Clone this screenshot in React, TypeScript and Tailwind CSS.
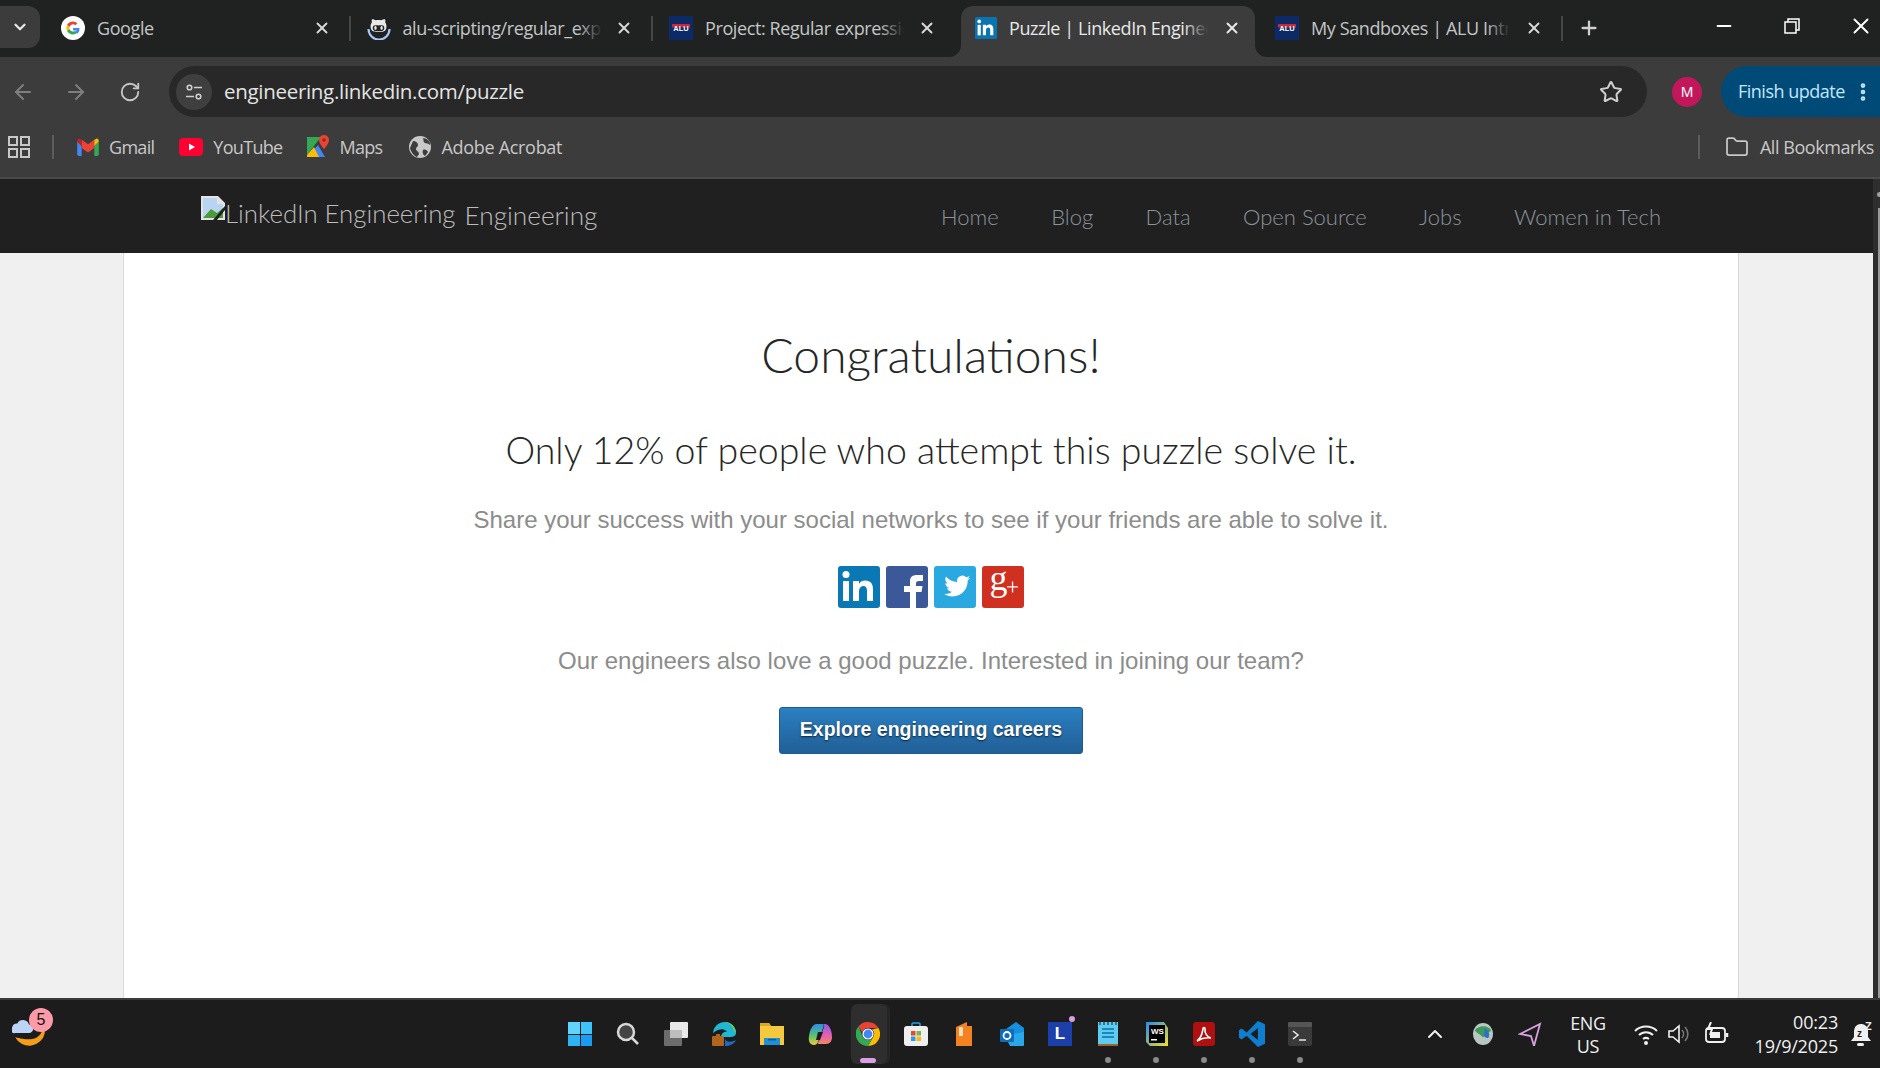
import type { ReactNode } from 'react';
import { ArrowLeft, ArrowRight, ChevronDown, ChevronUp, Folder, Minus, MoreVertical, Plus, RotateCw, Star, X } from 'lucide-react';
import { FaGithubAlt } from 'react-icons/fa';

const uiFont = "font-['Open_Sans',sans-serif]";

function GoogleIcon() {
  return (
    <svg viewBox="0 0 24 24" className="w-6 h-6 shrink-0">
      <circle cx="12" cy="12" r="12" fill="#fff" />
      <path d="M12 5.500a6.500 6.500 0 0 1 4.400 1.700l-2 2A3.700 3.700 0 0 0 8.500 11L6 9a6.500 6.500 0 0 1 6-3.500z" fill="#ea4335" />
      <path d="M6 9l2.500 2a3.700 3.700 0 0 0 0 2L6 15a6.500 6.500 0 0 1 0-6z" fill="#fbbc05" />
      <path d="M6 15l2.500-2a3.700 3.700 0 0 0 5.500 2l2.200 1.800A6.500 6.500 0 0 1 6 15z" fill="#34a853" />
      <path d="M18.400 12h-6.300v2.600h3.600a3 3 0 0 1-1.700 1.400l2.200 1.800a6.300 6.300 0 0 0 2.200-5.800z" fill="#4285f4" />
    </svg>
  );
}

function GithubIcon() {
  return (
    <div className="relative w-6 h-6 shrink-0 flex items-center justify-center">
      <svg viewBox="0 0 24 24" className="absolute inset-0 w-6 h-6">
        <path d="M1.500 13a10.500 10.500 0 0 0 21 0" fill="none" stroke="#a8c7fa" strokeWidth="2.200" />
      </svg>
      <FaGithubAlt size={17} className="relative -mt-[6px] text-[#e8e8e8]" />
    </div>
  );
}

function AluIcon() {
  return (
    <svg viewBox="0 0 24 24" className="w-6 h-6 shrink-0">
      <rect width="24" height="24" fill="#0b2a66" />
      <rect x="3" y="8" width="18" height="3.500" fill="#c8283c" />
      <text x="12" y="15" textAnchor="middle" fontFamily="'Liberation Sans', sans-serif" fontSize="7.500" fontWeight="700" fill="#fff">ALU</text>
    </svg>
  );
}

function InIcon({ className, fill }: { className: string; fill: string }) {
  return (
    <svg viewBox="0 0 42 42" className={className}>
      <rect width="42" height="42" rx="3" fill={fill} />
      <rect x="5" y="15" width="6" height="20" fill="#fff" />
      <circle cx="8" cy="8.500" r="3.500" fill="#fff" />
      <path d="M15 15h6v3c1-2 3-3.500 6-3.500 6 0 8 3.500 8 9V35h-6V25c0-3-1-5-3.500-5S21 22 21 25v10h-6z" fill="#fff" />
    </svg>
  );
}

function Tab({ icon, title, width, divider = true }: { icon: ReactNode; title: string; width: string; divider?: boolean }) {
  return (
    <div className={`relative ${width} h-[51px] pb-[7px] shrink-0 flex items-center pl-[16px] pr-[12px] text-[#c4c6c6]`}>
      {icon}
      <div className={`relative ml-[12px] w-[199px] overflow-hidden whitespace-nowrap text-[18px] tracking-[-0.4px] leading-[24px] ${uiFont}`}>
        {title}
        <div className="absolute right-0 top-0 h-full w-[24px] bg-gradient-to-r from-transparent to-[#202222]" />
      </div>
      <X size={18} strokeWidth={2.5} className="ml-auto mr-[8px] text-[#d8d8d8]" />
      {divider && <div className="absolute right-0 top-[10px] h-[25px] w-[2px] bg-[#454747]" />}
    </div>
  );
}

function ActiveTab({ icon, title }: { icon: ReactNode; title: string }) {
  return (
    <div className="relative ml-[5.500px] mr-[4px] w-[294px] h-[51px] pb-[7px] shrink-0 flex items-center pl-[14px] pr-[8px] bg-[#3c3c3c] rounded-t-[12px] text-[#e8e8e8]">
      <svg viewBox="0 0 12 12" className="absolute -left-[12px] bottom-0 w-[12px] h-[12px]">
        <path d="M12 0v12H0A12 12 0 0 0 12 0z" fill="#3c3c3c" />
      </svg>
      <svg viewBox="0 0 12 12" className="absolute -right-[12px] bottom-0 w-[12px] h-[12px]">
        <path d="M0 0v12h12A12 12 0 0 1 0 0z" fill="#3c3c3c" />
      </svg>
      {icon}
      <div className={`relative ml-[12px] w-[199px] overflow-hidden whitespace-nowrap text-[18px] tracking-[-0.4px] leading-[24px] ${uiFont}`}>
        {title}
        <div className="absolute right-0 top-0 h-full w-[24px] bg-gradient-to-r from-transparent to-[#3c3c3c]" />
      </div>
      <X size={18} strokeWidth={2.5} className="ml-auto mr-[6px] text-[#e8e8e8]" />
    </div>
  );
}

function Bookmark({ icon, label, tracking = 'tracking-[-0.7px]' }: { icon: ReactNode; label: string; tracking?: string }) {
  return (
    <div className={`flex items-center gap-[10px] text-[18px] ${tracking} text-[#c8c8c8] ${uiFont}`}>
      {icon}
      {label}
    </div>
  );
}

function TaskIcon({ children, dot }: { children: ReactNode; dot?: boolean }) {
  return (
    <div className="relative w-[48px] h-[68px] flex items-center justify-center shrink-0">
      {children}
      {dot && <div className="absolute bottom-[5px] w-[6px] h-[6px] rounded-full bg-[#8a8a8a]" />}
    </div>
  );
}

export default function App() {
  return (
    <div className="h-[1068px] w-[1880px] flex flex-col overflow-hidden bg-[#f0f0f0]">
      {/* tab strip */}
      <div className="h-[57px] bg-[#202222] flex items-end shrink-0">
        <div className="w-[40px] h-[42px] mb-[9px] bg-[#3c3c3c] rounded-r-[12px] flex items-center justify-center shrink-0 text-[#e8e8e8]">
          <ChevronDown size={18} strokeWidth={3} />
        </div>
        <div className="ml-[5px] flex items-end">
          <Tab width="w-[305.500px]" icon={<GoogleIcon />} title="Google" />
          <Tab width="w-[302.500px]" icon={<GithubIcon />} title="alu-scripting/regular_expressions" />
          <Tab width="w-[302.500px]" icon={<AluIcon />} title="Project: Regular expressions" divider={false} />
          <ActiveTab icon={<InIcon className="w-[22px] h-[22px] shrink-0" fill="#0a74b0" />} title="Puzzle | LinkedIn Engineering" />
          <Tab width="w-[303.500px]" icon={<AluIcon />} title="My Sandboxes | ALU Intranet" />
        </div>
        <div className="h-[51px] pb-[7px] flex items-center ml-[15px] text-[#d0d0d0]">
          <Plus size={22} strokeWidth={2.5} />
        </div>
        <div className="ml-auto h-[51px] mb-[6px] flex items-center gap-[48.500px] pr-[6px] text-white">
          <Minus size={22} strokeWidth={2} />
          <svg viewBox="0 0 16 16" className="w-[16px] h-[16px]" fill="none" stroke="#fff" strokeWidth="1.500">
            <rect x="1" y="4" width="11" height="11" />
            <path d="M4 4V1h11v11h-3" />
          </svg>
          <X size={26} strokeWidth={1.75} />
        </div>
      </div>

      {/* toolbar */}
      <div className="h-[122px] bg-[#3c3c3c] border-b-2 border-[#4a4a4a] shrink-0 flex flex-col">
        <div className="mt-[9px] h-[51px] flex items-center">
          <div className="w-[169px] flex items-center pl-[11px] gap-[29px] shrink-0">
            <ArrowLeft size={24} className="text-[#7e7e7e]" />
            <ArrowRight size={24} className="text-[#7e7e7e]" />
            <RotateCw size={22} className="ml-[2px] text-[#c8c8c8]" />
          </div>
          <div className="w-[1478px] h-[51px] rounded-full bg-[#282828] flex items-center pl-[7px] pr-[24px] shrink-0">
            <div className="w-[36px] h-[36px] rounded-full bg-[#3f3f3f] flex items-center justify-center">
              <svg viewBox="0 0 20 20" className="w-[20px] h-[20px]" fill="none" stroke="#d0d0d0" strokeWidth="1.600">
                <circle cx="5.500" cy="5.500" r="2.300" />
                <path d="M10 5.500h8M2 14.500h8" />
                <circle cx="14.500" cy="14.500" r="2.300" />
              </svg>
            </div>
            <span className={`ml-[12px] text-[20.500px] tracking-[-0.3px] text-[#e3e3e3] ${uiFont}`}>engineering.linkedin.com/puzzle</span>
            <Star size={24} strokeWidth={2} className="ml-auto text-[#d0d0d0]" />
          </div>
          <div className="ml-[25px] w-[30px] h-[30px] rounded-full bg-[#c2185b] flex items-center justify-center text-white text-[14px] shrink-0">M</div>
          <div className={`ml-[19px] w-[160px] h-[51px] rounded-l-full bg-[#004a77] flex items-center pl-[17px] gap-[7px] text-[18px] tracking-[-0.5px] text-[#c2e7ff] shrink-0 ${uiFont}`}>
            Finish update
            <MoreVertical size={22} strokeWidth={3} />
          </div>
        </div>
        <div className="flex-1 flex items-center pl-[8px]">
          <svg viewBox="0 0 22 22" className="w-[22px] h-[22px] shrink-0" fill="none" stroke="#c8c8c8" strokeWidth="2">
            <rect x="1" y="1" width="8" height="8" />
            <rect x="13" y="1" width="8" height="8" />
            <rect x="1" y="13" width="8" height="8" />
            <rect x="13" y="13" width="8" height="8" />
          </svg>
          <div className="ml-[22px] h-[24px] w-[2px] bg-[#5c5c5c]" />
          <div className="ml-[23px] flex items-center gap-[25px]">
            <Bookmark
              label="Gmail"
              icon={
                <svg viewBox="0 0 24 20" className="w-[22px] h-[18px]">
                  <path d="M0 4v14a2 2 0 0 0 2 2h3V9z" fill="#4285f4" />
                  <path d="M24 4v14a2 2 0 0 1-2 2h-3V9z" fill="#34a853" />
                  <path d="M5 2v9l7 5 7-5V2l-7 5z" fill="#ea4335" />
                  <path d="M0 4l5 5V2L3 1C1.500 0 0 1.500 0 4z" fill="#c5221f" />
                  <path d="M24 4l-5 5V2l2-1c1.500-1 3 .5 3 3z" fill="#fbbc05" />
                </svg>
              }
            />
            <Bookmark
              label="YouTube"
              icon={
                <svg viewBox="0 0 24 18" className="w-[24px] h-[18px]">
                  <rect width="24" height="18" rx="4" fill="#ff0033" />
                  <path d="M10 5.500l6 3.500-6 3.500z" fill="#fff" />
                </svg>
              }
            />
            <Bookmark
              label="Maps"
              icon={
                <svg viewBox="0 0 22 24" className="w-[22px] h-[24px]">
                  <path d="M0 2h14L0 20z" fill="#34a853" />
                  <path d="M0 22L11 10l7 12z" fill="#4285f4" />
                  <path d="M0 20l7-8 5 10H0z" fill="#fbbc05" />
                  <path d="M17 0a5 5 0 0 1 5 5c0 4-5 9-5 9s-5-5-5-9a5 5 0 0 1 5-5z" fill="#ea4335" />
                  <circle cx="17" cy="5" r="1.800" fill="#8e2a20" />
                </svg>
              }
            />
            <div className="ml-[2px]">
              <Bookmark
                label="Adobe Acrobat"
                tracking="tracking-[-0.3px]"
                icon={
                  <svg viewBox="0 0 22 22" className="w-[22px] h-[22px]">
                    <circle cx="11" cy="11" r="11" fill="#c8c8c8" />
                    <path d="M4 5c3 0 5 2 5 4s-2 2-2 4 3 2 3 5l-2 3C5 20 2 16 1 12zM14 2c1 3 0 4 2 5s3 0 5 2c1-3-3-7-7-7zM14 14c2-1 4 0 5 2l-3 4c-2-1-3-4-2-6z" fill="#3c3c3c" />
                  </svg>
                }
              />
            </div>
          </div>
          <div className="ml-auto h-[24px] w-[2px] bg-[#5c5c5c]" />
          <div className={`ml-[25px] mr-[6px] flex items-center gap-[11px] text-[18px] tracking-[-0.45px] text-[#c8c8c8] ${uiFont}`}>
            <Folder size={24} strokeWidth={1.75} />
            All Bookmarks
          </div>
        </div>
      </div>

      <div className="flex-1 min-h-0 flex">
        <div className="w-[1873px] flex flex-col">
          {/* site header */}
          <div className="h-[74px] bg-[#202020] shrink-0 flex items-center pl-[201px] pr-[212px] font-['Lato',sans-serif] font-light">
            <div className="flex items-center text-[#bcbcbc]">
              <div className="flex items-start -mt-[6px] text-[25.800px] leading-[34px]">
                <svg viewBox="0 0 24 24" className="w-[24px] h-[24px] shrink-0">
                  <path d="M0 0h17l7 7v17H0z" fill="#e4e4e4" />
                  <path d="M2 2h14v6h6v14H2z" fill="#b8d4f0" />
                  <path d="M2 22l8-9 6 4 6-5v10z" fill="#4d9a3a" />
                  <path d="M12 24L24 10v4L16 24z" fill="#202020" />
                </svg>
                LinkedIn Engineering
              </div>
              <span className="ml-[9px] text-[26.200px]">Engineering</span>
            </div>
            <nav className="ml-auto mt-[1px] flex items-center gap-[52.400px] text-[22px] text-[#8b949b]">
              <span>Home</span>
              <span>Blog</span>
              <span>Data</span>
              <span>Open Source</span>
              <span>Jobs</span>
              <span>Women in Tech</span>
            </nav>
          </div>

          {/* page */}
          <div className="flex-1 min-h-0 pl-[123px]">
            <main className="h-full w-[1616px] bg-white border-x border-[#d8d8d8] flex flex-col items-center pt-[74px]">
              <h1 className="font-['Lato',sans-serif] font-light text-[48px] leading-[56px] text-[#262626]">Congratulations!</h1>
              <h2 className="mt-[45px] font-['Lato',sans-serif] font-light text-[37.500px] leading-[44px] text-[#262626]">Only 12% of people who attempt this puzzle solve it.</h2>
              <p className="mt-[32px] font-['Liberation_Sans',sans-serif] text-[24px] leading-[32px] text-[#8c8c8c]">Share your success with your social networks to see if your friends are able to solve it.</p>
              <div className="mt-[30px] flex gap-[6px]">
                <InIcon className="w-[42px] h-[42px]" fill="#0a78b5" />
                <svg viewBox="0 0 42 42" className="w-[42px] h-[42px]">
                  <rect width="42" height="42" rx="3" fill="#3b5998" />
                  <path d="M24 42V26h-6v-6h6v-5c0-4 2.500-6 7-6h6v6h-4c-2 0-3 .8-3 2.500V20h6.500l-1 6H30v16z" fill="#fff" />
                </svg>
                <svg viewBox="0 0 42 42" className="w-[42px] h-[42px]">
                  <rect width="42" height="42" rx="3" fill="#2aa9e0" />
                  <path d="M36 12c-1 .5-2 .8-3 1 1-.7 2-1.800 2.500-3-1 .6-2.200 1-3.300 1.300a5.300 5.300 0 0 0-9 4.800C18.800 15.900 14.800 13.800 12 10.500c-1.400 2.400-.7 5.500 1.600 7-.8 0-1.600-.2-2.300-.6 0 2.500 1.800 4.700 4.200 5.200-.8.200-1.600.2-2.400.1.700 2.100 2.600 3.600 4.900 3.600-2.200 1.700-5 2.500-7.800 2.200 2.400 1.500 5.200 2.400 8.200 2.400 10 0 15.600-8.400 15.300-16 1-.7 1.900-1.600 2.300-2.400z" fill="#fff" />
                </svg>
                <svg viewBox="0 0 42 42" className="w-[42px] h-[42px]">
                  <rect width="42" height="42" rx="3" fill="#cf3020" />
                  <text x="7.500" y="24" fontFamily="'Liberation Serif', serif" fontSize="36" fill="#fff">g</text>
                  <path d="M25 20.300h11v1.300H25zM29.900 15.500h1.300v11h-1.300z" fill="#fff" />
                </svg>
              </div>
              <p className="mt-[37px] font-['Liberation_Sans',sans-serif] text-[24px] leading-[32px] text-[#8c8c8c]">Our engineers also love a good puzzle. Interested in joining our team?</p>
              <button className="mt-[30px] w-[304px] h-[47px] pb-[1px] rounded-[3px] border border-[#1d5a8e] bg-gradient-to-b from-[#2b7fc2] to-[#215f96] font-['Liberation_Sans',sans-serif] font-bold text-[19.500px] text-white [text-shadow:0_1px_2px_rgba(0,0,0,0.7)]">
                Explore engineering careers
              </button>
            </main>
          </div>
        </div>
        {/* scrollbar */}
        <div className="w-[7px] bg-[#2e2e2e] flex flex-col items-end pt-[13px]">
          <div className="w-[3px] h-[5px] rounded-l-full bg-[#a0a0a0]" />
          <div className="mt-[11px] w-[2px] flex-1 bg-[#9a9a9a]" />
        </div>
      </div>

      {/* taskbar */}
      <div className="h-[70px] bg-[#1c1c1c] border-t-2 border-[#3a3a3a] shrink-0 flex items-center">
        <div className="relative w-[556px] h-full shrink-0">
          <svg viewBox="0 0 34 34" className="absolute left-[12px] top-[16px] w-[36px] h-[36px]">
            <path d="M3 20a15 15 0 0 0 28-4c0-2-1-5-2-6 0 8-6 12-12 12-5 0-10-1-14-2z" fill="#f59c1a" />
            <path d="M0 11a5 5 0 0 1 5-4 6 6 0 0 1 11 1 4 4 0 0 1 0 8H3a3 3 0 0 1-3-5z" fill="#bcd4f5" />
          </svg>
          <div className="absolute left-[29px] top-[8px] w-[24px] h-[24px] rounded-full bg-[#ff9aa8] flex items-center justify-center text-[16px] text-[#111] font-['Liberation_Sans',sans-serif]">5</div>
        </div>
        <TaskIcon>
          <div className="grid grid-cols-2 gap-[1px] w-[24px] h-[24px]">
            <div className="bg-[#62d4fb]" />
            <div className="bg-[#3fc2f8]" />
            <div className="bg-[#2cb4f5]" />
            <div className="bg-[#1a9df0]" />
          </div>
        </TaskIcon>
        <TaskIcon>
          <svg viewBox="0 0 24 24" className="w-[24px] h-[24px]" fill="#444" stroke="#d8d8d8" strokeWidth="2.500">
            <circle cx="10" cy="10" r="8" />
            <path d="M16 16l6 6" />
          </svg>
        </TaskIcon>
        <TaskIcon>
          <svg viewBox="0 0 24 24" className="w-[24px] h-[24px]">
            <rect x="6" y="0" width="18" height="16" rx="1" fill="#e8e8e8" />
            <rect x="0" y="8" width="18" height="16" rx="1" fill="#6c6c6c" />
            <rect x="6" y="8" width="12" height="8" fill="#bdbdbd" />
          </svg>
        </TaskIcon>
        <TaskIcon>
          <svg viewBox="0 0 24 24" className="w-[24px] h-[24px]">
            <path d="M1 12C1 5 6 0 13 0c6 0 11 5 11 11 0 3-3 4-6 4H9c0-3 3-6 6-5-2-4-8-3-11-1-2 1-3 2-3 3z" fill="#1fb7d4" />
            <path d="M13 24c5 0 9-2 11-6-4 2-9 3-11-1z" fill="#1d6bc4" />
            <path d="M24 11c0-6-5-11-11-11 4 1 8 4 9 9z" fill="#6ed04f" />
            <rect x="0" y="14" width="12" height="10" rx="1" fill="#b0651f" />
            <rect x="4" y="12" width="4" height="2" fill="#b0651f" />
          </svg>
        </TaskIcon>
        <TaskIcon>
          <svg viewBox="0 0 24 24" className="w-[24px] h-[24px]">
            <path d="M0 1h9l2 3h13v19H0z" fill="#f5c93e" />
            <path d="M0 1h9l2 3H0z" fill="#dba81f" />
            <path d="M4 16h16v7H4z" fill="#1f8fd6" />
            <path d="M8 17h8v1.500H8z" fill="#0d5da3" />
          </svg>
        </TaskIcon>
        <TaskIcon>
          <svg viewBox="0 0 24 24" className="w-[24px] h-[24px]">
            <path d="M8 2h6c2 0 2 2 1 4l-5 14c-1 2-2 3-4 3-4 0-6-4-5-9C2 8 4 3 8 2z" fill="url(#cpA)" />
            <path d="M14 2h3c4 0 7 6 7 13 0 4-2 7-6 7h-7c-2 0-1-2 0-3l5-14c.5-1.500 0-3-2-3z" fill="url(#cpB)" />
            <path d="M10 10h5l-3 8H8z" fill="#1c1c1c" />
            <defs>
              <linearGradient id="cpA" x1="0" y1="0" x2="0" y2="1">
                <stop offset="0" stopColor="#2b8ee8" />
                <stop offset="0.600" stopColor="#5fc66a" />
                <stop offset="1" stopColor="#f8c63a" />
              </linearGradient>
              <linearGradient id="cpB" x1="0" y1="0" x2="0" y2="1">
                <stop offset="0" stopColor="#8a5ce8" />
                <stop offset="0.600" stopColor="#e860b0" />
                <stop offset="1" stopColor="#f08a5a" />
              </linearGradient>
            </defs>
          </svg>
        </TaskIcon>
        <TaskIcon>
          <div className="absolute left-[10px] top-[4px] w-[36px] h-[60px] rounded-[6px] bg-[#262626]" />
          <div className="absolute left-[7px] top-[4px] w-[36px] h-[60px] rounded-[6px] bg-[#2e2e2e]" />
          <svg viewBox="0 0 24 24" className="relative w-[24px] h-[24px]">
            <path d="M12 0a12 12 0 0 1 10.400 6H12a6 6 0 0 0-5.800 4.500L2.600 4.300A12 12 0 0 1 12 0z" fill="#ea4335" />
            <path d="M22.400 6A12 12 0 0 1 12 24l5.200-9A6 6 0 0 0 16 7.500z" fill="#fbbc05" />
            <path d="M2.600 4.300A12 12 0 0 0 12 24l5.200-9A6 6 0 0 1 6.800 15z" fill="#34a853" />
            <circle cx="12" cy="12" r="5" fill="#4285f4" stroke="#fff" strokeWidth="1.200" />
          </svg>
          <div className="absolute bottom-[5px] w-[16px] h-[5px] rounded-full bg-[#d8a0e0]" />
        </TaskIcon>
        <TaskIcon>
          <svg viewBox="0 0 24 24" className="w-[24px] h-[24px]">
            <path d="M8 5V2a1 1 0 0 1 1-1h6a1 1 0 0 1 1 1v3" fill="none" stroke="#1fa3e0" strokeWidth="1.500" />
            <rect y="4" width="24" height="20" rx="3" fill="#efefef" />
            <rect x="7" y="9" width="4.500" height="4.500" fill="#e8472e" />
            <rect x="12.500" y="9" width="4.500" height="4.500" fill="#7cb342" />
            <rect x="7" y="14.500" width="4.500" height="4.500" fill="#2a9de0" />
            <rect x="12.500" y="14.500" width="4.500" height="4.500" fill="#f8b71c" />
          </svg>
        </TaskIcon>
        <TaskIcon>
          <svg viewBox="0 0 16 24" className="w-[16px] h-[24px]">
            <path d="M0 5l11-5v4h5v20H0z" fill="#f58220" />
            <rect x="3" y="5" width="4" height="9" fill="#fde0c0" />
          </svg>
        </TaskIcon>
        <TaskIcon>
          <svg viewBox="0 0 24 24" className="w-[24px] h-[24px]">
            <path d="M6 7l10-7 8 6v14H8z" fill="#1490df" />
            <path d="M8 20V13l16-3v13a1 1 0 0 1-1 1H10z" fill="#28a8ea" />
            <rect x="0" y="7" width="14" height="13" rx="1" fill="#0f6cbd" />
            <circle cx="7" cy="13.500" r="3.500" fill="none" stroke="#fff" strokeWidth="1.800" />
          </svg>
        </TaskIcon>
        <TaskIcon>
          <div className="w-[24px] h-[24px] bg-[#1c3faa] flex items-center justify-center text-white font-bold text-[17px] font-['Liberation_Sans',sans-serif]">L</div>
          <div className="absolute top-[16px] right-[9px] w-[6px] h-[6px] rounded-full bg-[#d8a0e0]" />
        </TaskIcon>
        <TaskIcon dot>
          <svg viewBox="0 0 20 24" className="w-[20px] h-[24px]">
            <rect width="20" height="22" fill="#5ccdf0" />
            <rect y="22" width="20" height="2" fill="#a0622a" />
            <path d="M4 7h12M4 11h12M4 15h12" stroke="#0d6fa8" strokeWidth="1.600" />
            <path d="M2 0v3M6 0v3M10 0v3M14 0v3M18 0v3" stroke="#1c1c1c" strokeWidth="1" />
          </svg>
        </TaskIcon>
        <TaskIcon dot>
          <svg viewBox="0 0 24 24" className="w-[24px] h-[24px]">
            <path d="M2 0h18l4 6v18H6l-4-4z" fill="url(#wsG)" />
            <rect x="5" y="3" width="16" height="18" fill="#000" />
            <path d="M7 17h6v1.500H7z" fill="#fff" />
            <text x="7" y="12" fontFamily="'Liberation Sans', sans-serif" fontSize="8" fontWeight="700" fill="#fff">WS</text>
            <defs>
              <linearGradient id="wsG" x1="0" y1="0" x2="1" y2="1">
                <stop offset="0" stopColor="#1f8df2" />
                <stop offset="1" stopColor="#f7e025" />
              </linearGradient>
            </defs>
          </svg>
        </TaskIcon>
        <TaskIcon dot>
          <svg viewBox="0 0 24 24" className="w-[24px] h-[24px]">
            <rect width="22" height="24" x="1" rx="3" fill="#b01010" />
            <path d="M5 19c3-2 5-6 6-12 0-2 2-2 2 0-.5 4 2 8 6 9-4-.5-9 0-14 3z" fill="none" stroke="#fff" strokeWidth="1.600" />
          </svg>
        </TaskIcon>
        <TaskIcon dot>
          <svg viewBox="0 0 24 24" className="w-[26px] h-[26px]">
            <path d="M17.500 0L24 3v18l-6.500 3L7 13.500 2.500 17 0 15.500V8.500L2.500 7 7 10.500z" fill="#0e7fd0" />
            <path d="M17.500 6.500L10.500 12l7 5.500z" fill="#1c1c1c" />
          </svg>
        </TaskIcon>
        <TaskIcon dot>
          <svg viewBox="0 0 24 24" className="w-[24px] h-[24px]">
            <rect width="24" height="24" rx="2" fill="#3a3a3a" />
            <rect width="24" height="5" rx="1" fill="#555" />
            <path d="M5 9l5 4-5 4M11 18h7" fill="none" stroke="#e8e8e8" strokeWidth="1.600" />
          </svg>
        </TaskIcon>

        {/* tray */}
        <div className={`flex-1 h-full flex items-center text-[#f0f0f0] ${uiFont}`}>
          <ChevronUp size={24} strokeWidth={2} className="ml-[99px]" />
          <svg viewBox="0 0 24 24" className="ml-[25px] w-[22px] h-[24px]">
            <ellipse cx="12" cy="12" rx="11" ry="12" fill="#b8c8c0" />
            <path d="M3 8c5-6 14-6 18 0-3 3-6 3-9 8-3-4-6-4-9-8z" fill="#3c9a5a" />
            <path d="M14 6c4 2 6 6 4 10-2 1-4 0-5-2z" fill="#2c6ec8" />
          </svg>
          <svg viewBox="0 0 24 24" className="ml-[24px] w-[24px] h-[24px]" fill="none" stroke="#d8a0e0" strokeWidth="1.800">
            <path d="M2 12L22 2l-6 22-3-10z" />
          </svg>
          <div className="ml-[26px] mt-[2px] w-[40px] flex flex-col items-center text-[18px] leading-[23px] tracking-[-0.3px]">
            <span>ENG</span>
            <span>US</span>
          </div>
          <svg viewBox="0 0 24 24" className="ml-[26px] w-[24px] h-[24px]" fill="none" stroke="#f0f0f0" strokeWidth="2">
            <path d="M1 9a16 16 0 0 1 22 0M5 13a10 10 0 0 1 14 0M9 17a5 5 0 0 1 6 0" />
            <circle cx="12" cy="21" r="1" fill="#f0f0f0" />
          </svg>
          <svg viewBox="0 0 24 24" className="ml-[8px] w-[24px] h-[24px]" fill="none" stroke="#f0f0f0" strokeWidth="1.600">
            <path d="M3 9v6h4l6 5V4L7 9z" />
            <path d="M16 8a6 6 0 0 1 0 8M19 5a10 10 0 0 1 0 14" stroke="#777" />
          </svg>
          <svg viewBox="0 0 26 24" className="ml-[13px] w-[26px] h-[24px]" fill="none" stroke="#f0f0f0" strokeWidth="1.800">
            <rect x="3" y="6" width="19" height="14" rx="3" />
            <path d="M24 11v4" strokeWidth="2.500" />
            <rect x="7" y="10" width="10" height="6" fill="#f0f0f0" stroke="none" />
            <path d="M8 0L5 7h4l-2 6" strokeWidth="2" />
          </svg>
          <div className="ml-[15px] -mt-[1px] w-[94px] flex flex-col items-end text-[18px] leading-[24px] tracking-[-0.2px]">
            <span>00:23</span>
            <span className="whitespace-nowrap">19/9/2025</span>
          </div>
          <svg viewBox="0 0 24 26" className="ml-[12px] w-[24px] h-[26px]" fill="#f0f0f0">
            <path d="M10 3a7 7 0 0 0-6 7v6l-3 4h20l-3-4v-6a7 7 0 0 0-6-7z" />
            <rect x="7" y="22" width="7" height="3" rx="1.500" />
            <text x="7" y="16" fontFamily="'Liberation Sans', sans-serif" fontSize="10" fontWeight="700" fill="#1c1c1c">z</text>
            <text x="15" y="9" fontFamily="'Liberation Sans', sans-serif" fontSize="11" fontWeight="700">Z</text>
          </svg>
        </div>
      </div>
    </div>
  );
}
